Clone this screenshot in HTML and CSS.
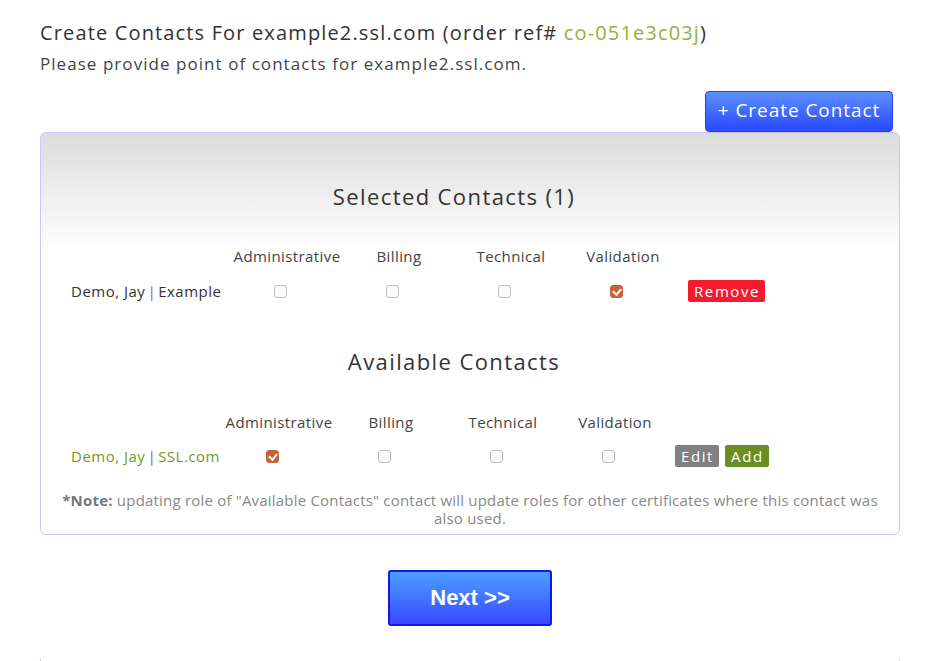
FILE: index.html
```html
<!DOCTYPE html>
<html>
<head>
<meta charset="utf-8">
<link rel="stylesheet" href="styles.css">
</head>
<body>
<div class="page">
  <h1 class="title">Create Contacts For example2.ssl.com (order ref# <span class="ref">co-051e3c03j</span>)</h1>
  <p class="subtitle">Please provide point of contacts for example2.ssl.com.</p>
  <div class="toolbar"><button class="btn-create">+ Create Contact</button></div>
  <div class="panel">
    <h2 class="section-title first">Selected Contacts (1)</h2>
    <div class="grid grid-selected">
      <div class="cell head"></div>
      <div class="cell head">Administrative</div>
      <div class="cell head">Billing</div>
      <div class="cell head">Technical</div>
      <div class="cell head">Validation</div>
      <div class="cell head"></div>
      <div class="cell name">Demo, Jay <span class="sep">|</span> Example</div>
      <div class="cell box"><span class="cb"></span></div>
      <div class="cell box"><span class="cb"></span></div>
      <div class="cell box"><span class="cb"></span></div>
      <div class="cell box"><span class="cb checked"></span></div>
      <div class="cell actions"><span class="tag remove">Remove</span></div>
    </div>
    <h2 class="section-title second">Available Contacts</h2>
    <div class="grid grid-available">
      <div class="cell head"></div>
      <div class="cell head">Administrative</div>
      <div class="cell head">Billing</div>
      <div class="cell head">Technical</div>
      <div class="cell head">Validation</div>
      <div class="cell head"></div>
      <div class="cell name green">Demo, Jay <span class="sep">|</span> SSL.com</div>
      <div class="cell box"><span class="cb checked"></span></div>
      <div class="cell box"><span class="cb"></span></div>
      <div class="cell box"><span class="cb"></span></div>
      <div class="cell box"><span class="cb"></span></div>
      <div class="cell actions"><span class="tag edit">Edit</span><span class="tag add">Add</span></div>
    </div>
    <p class="note"><b>*Note:</b> updating role of "Available Contacts" contact will update roles for other certificates where this contact was also used.</p>
  </div>
  <div class="next-wrap"><button class="btn-next">Next &gt;&gt;</button></div>
  <div class="panel-stub"></div>
</div>
</body>
</html>
```
FILE: styles.css
```css
html, body { margin: 0; padding: 0; background: #fff; }
body { font-family: "Open Sans", "Liberation Sans", sans-serif; color: #333; }
.page { padding: 19px 37px 0 40px; }
.title { margin: 0; font-size: 20px; font-weight: 500; line-height: 28px; color: #333; letter-spacing: 1.15px; }
.ref { color: #8cb43c; }
.subtitle { margin: 4px 0 0; font-size: 17px; line-height: 26px; color: #444; letter-spacing: 1.05px; }
.toolbar { display: flex; justify-content: flex-end; padding-right: 7px; margin-top: 14px; }
.btn-create {
  font-family: inherit; font-size: 19px; color: #fff; height: 41px; width: 188px;
  background: linear-gradient(#5c8fff, #2b48ff); border: 1px solid #2a3cf0; border-radius: 4px;
  padding: 0 0 2px; line-height: 37px; letter-spacing: 0.95px;
}
.panel {
  border: 1px solid #c9c6ff; border-radius: 6px;
  background: linear-gradient(#dcdcdc 0, #ffffff 118px);
  height: 403px; box-sizing: border-box;
}
.section-title { margin: 0; padding-right: 32px; text-align: center; font-size: 22px; font-weight: 500; color: #333; line-height: 30px; letter-spacing: 1.4px; }
.section-title.first { margin-top: 48px; }
.section-title.second { margin-top: 40px; }
.grid { display: grid; margin-top: 35px; row-gap: 10px; }
.grid-selected { grid-template-columns: 183px 112px 112px 112px 112px 1fr; }
.grid-available { grid-template-columns: 175px 112px 112px 112px 112px 1fr; margin-top: 36px; row-gap: 9px; }
.cell { display: flex; align-items: center; height: 30px; font-size: 15px; }
.cell.head { justify-content: center; padding-left: 14px; color: #444; height: 20px; letter-spacing: 0.4px; }
.name { padding-left: 30px; color: #333; white-space: nowrap; letter-spacing: 0.5px; }
.name.green { color: #6f9a22; }
.sep { color: #3a7fd0; margin: 0 2px; }
.box { justify-content: center; }
.cb { width: 11px; height: 11px; border: 1px solid #bdbdbd; border-radius: 3px; background: #fafafa; position: relative; }
.cb.checked { background: #c8603a; border-color: #c8603a; }
.cb.checked::after {
  content: ""; position: absolute; left: 3px; top: 1px; width: 4px; height: 6px;
  border: solid #fff; border-width: 0 2px 2px 0; transform: rotate(40deg);
}
.actions { padding-left: 16px; gap: 6px; }
.grid-available .actions { padding-left: 11px; }
.tag { color: #fff; font-size: 15px; letter-spacing: 1.6px; height: 22px; line-height: 22px; padding: 0 5px 0 6px; border-radius: 2px; }
.remove { background: #f51b2e; }
.edit { background: #808080; }
.add { background: #6b8e23; }
.note { margin: 20px 14px 0; text-align: center; font-size: 15px; line-height: 18px; color: #888; letter-spacing: 0.2px; }
.note b { color: #777; }
.next-wrap { display: flex; justify-content: center; margin-top: 35px; }
.btn-next {
  width: 164px; height: 56px; border: 2px solid #1414f5; border-radius: 3px;
  background: linear-gradient(#4aa0ff, #3a48ff); color: #fff;
  font-family: "Liberation Sans", Arial, sans-serif; font-weight: bold; font-size: 22px; padding: 0;
}
.panel-stub { margin-top: 33px; height: 10px; border-left: 1px solid #c9c6ff; border-right: 1px solid #c9c6ff; }
```
